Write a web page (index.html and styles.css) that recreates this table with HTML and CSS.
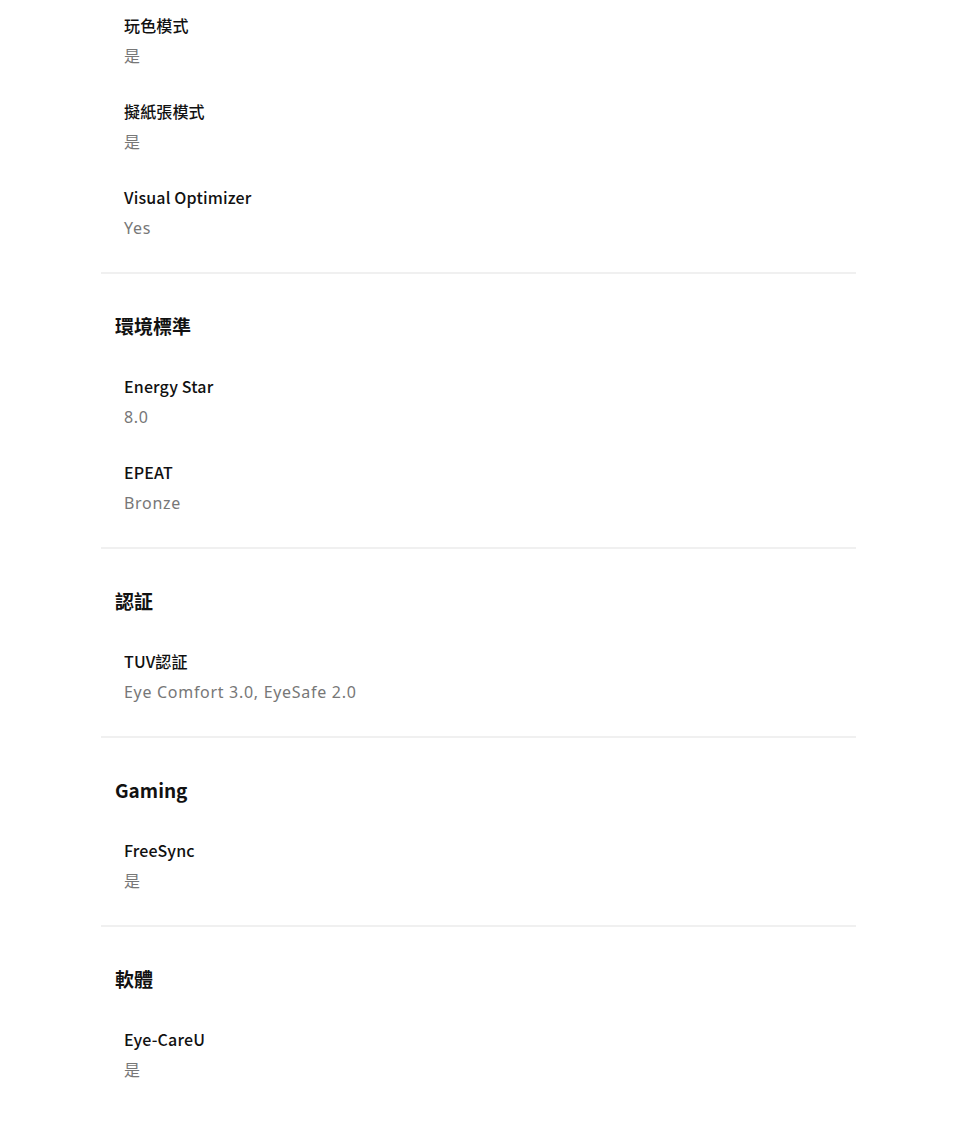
FILE: index.html
```html
<!DOCTYPE html>
<html lang="zh-Hant">
<head>
    <meta charset="UTF-8">
    <meta name="viewport" content="width=device-width, initial-scale=1.0">
    <title>規格</title>
    <link rel="stylesheet" href="styles.css">
</head>
<body>

<div class="spec-list">
    <!-- first section continues from above the fold -->
    <div class="spec-section spec-section-cont">
        <div class="spec-item">
            <div class="spec-label">玩色模式</div>
            <div class="spec-value">是</div>
        </div>
        <div class="spec-item">
            <div class="spec-label">擬紙張模式</div>
            <div class="spec-value">是</div>
        </div>
        <div class="spec-item">
            <div class="spec-label">Visual Optimizer</div>
            <div class="spec-value">Yes</div>
        </div>
    </div>

    <div class="spec-section">
        <h3 class="spec-title">環境標準</h3>
        <div class="spec-item">
            <div class="spec-label">Energy Star</div>
            <div class="spec-value">8.0</div>
        </div>
        <div class="spec-item">
            <div class="spec-label">EPEAT</div>
            <div class="spec-value">Bronze</div>
        </div>
    </div>

    <div class="spec-section">
        <h3 class="spec-title">認証</h3>
        <div class="spec-item">
            <div class="spec-label">TUV認証</div>
            <div class="spec-value">Eye Comfort 3.0, EyeSafe 2.0</div>
        </div>
    </div>

    <div class="spec-section">
        <h3 class="spec-title">Gaming</h3>
        <div class="spec-item">
            <div class="spec-label">FreeSync</div>
            <div class="spec-value">是</div>
        </div>
    </div>

    <div class="spec-section spec-section-last">
        <h3 class="spec-title">軟體</h3>
        <div class="spec-item">
            <div class="spec-label">Eye-CareU</div>
            <div class="spec-value">是</div>
        </div>
    </div>
</div>

</body>
</html>
```

FILE: styles.css
```css
body {
    font-family: 'Noto Sans CJK TC', 'Noto Sans', sans-serif;
    background-color: #fff;
    margin: 0;
    padding: 0;
    color: #111;
}
.spec-list {
    width: 755px;
    margin-left: 101px;
    padding-top: 11px;
}
.spec-section {
    padding: 37px 0 29px;
    border-bottom: 2px solid #f0f0f0;
    display: flex;
    flex-direction: column;
    gap: 26px;
}
.spec-section-cont {
    padding-top: 0;
}
.spec-section-last {
    border-bottom: none;
}
.spec-title {
    margin: 0 0 5px;
    padding-left: 14px;
    font-size: 19px;
    line-height: 30px;
    font-weight: 700;
    color: #111;
}
.spec-item {
    padding-left: 23px;
}
.spec-label {
    font-size: 16px;
    line-height: 29px;
    margin-bottom: 1px;
    font-weight: 500;
    color: #111;
    letter-spacing: 0.15px;
}
.spec-value {
    font-family: 'Noto Sans', 'Noto Sans CJK TC', sans-serif;
    font-size: 16px;
    line-height: 30px;
    color: #777;
    letter-spacing: 0.7px;
}
```
